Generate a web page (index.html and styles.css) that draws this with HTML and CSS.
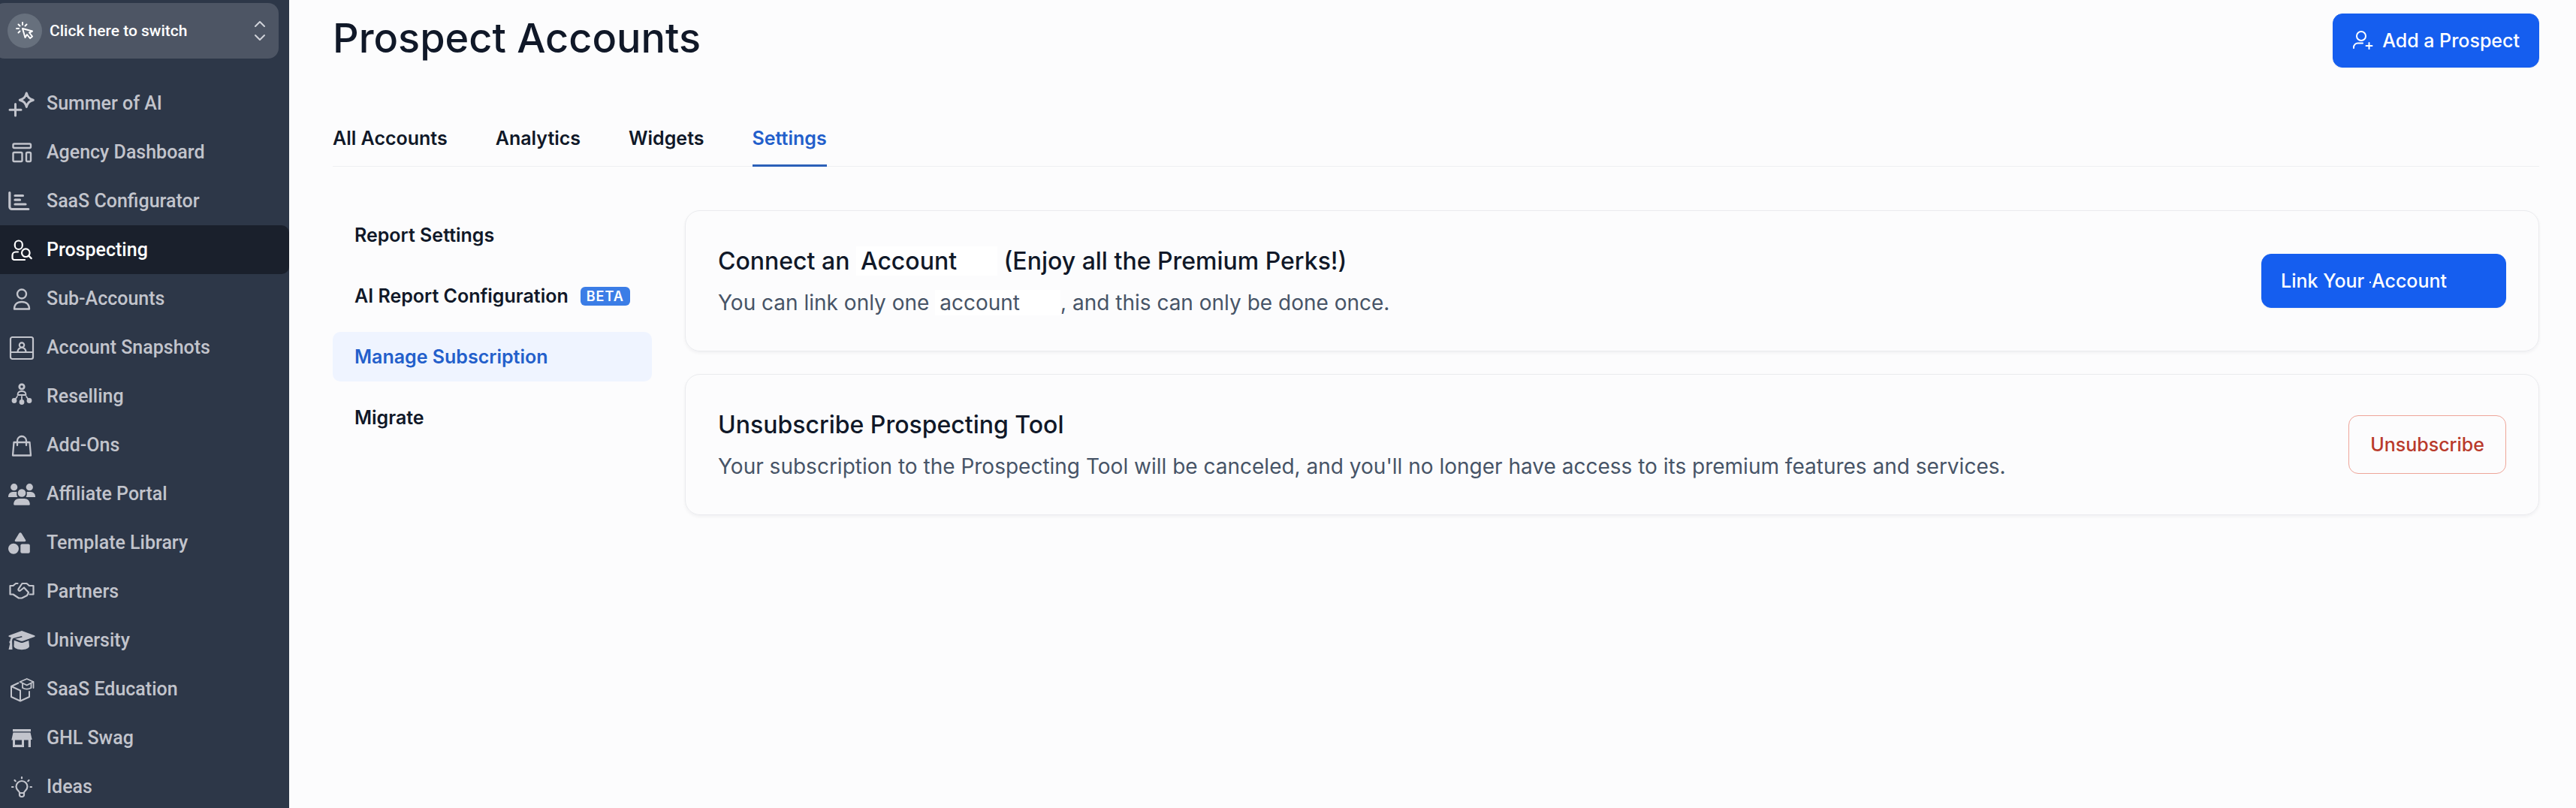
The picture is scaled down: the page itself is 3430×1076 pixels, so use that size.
FILE: index.html
```
<!DOCTYPE html>
<html lang="en">
<head>
    <meta charset="UTF-8">
    <meta name="viewport" content="width=device-width, initial-scale=1.0">
    <title>Prospect Accounts</title>
    <link rel="stylesheet" href="styles.css">
</head>
<body>
    <div class="layout">
        <aside class="sidebar">
            <button type="button" class="switcher">
                <span class="switcher-avatar">
                    <svg width="24" height="24" viewBox="0 0 24 24" fill="none" stroke="currentColor" stroke-width="2" stroke-linejoin="round" stroke-linecap="round">
                        <path d="M9 1v3M3.500 3.500l2 2M1 9h3M3.500 14.500l2-2M14.500 3.500l-2 2"/>
                        <path d="M9 9l3.500 12 2.500-4 4 5 3-2.500-4-5 4-2z"/>
                    </svg>
                </span>
                <span class="switcher-label">Click here to switch</span>
                <svg class="switcher-arrows" width="14" height="28" viewBox="0 0 14 28" fill="none" stroke="currentColor" stroke-width="2" stroke-linecap="round" stroke-linejoin="round">
                    <path d="M1 8l6-6 6 6M1 20l6 6 6-6"/>
                </svg>
            </button>

            <nav class="menu">
                <a href="#" class="menu-item">
                    <svg class="icon" viewBox="0 0 36 36" stroke-width="3">
                        <path d="M24.300 4c1.500 5.500 3.500 7.500 9 9.200-5.500 1.700-7.500 3.700-9 9.200-1.500-5.500-3.500-7.500-9-9.200 5.500-1.700 7.500-3.700 9-9.200z"/>
                        <path d="M9.500 18.500v15.500M2 26.200h15"/>
                    </svg>
                    Summer of AI
                </a>
                <a href="#" class="menu-item">
                    <svg class="icon" viewBox="0 0 36 36" stroke-width="2.400">
                        <rect x="6.500" y="6.500" width="23.500" height="5.500" rx="1.500"/>
                        <rect x="6.500" y="18" width="12" height="12" rx="1.500"/>
                        <rect x="24" y="18" width="6" height="12" rx="1.500"/>
                    </svg>
                    Agency Dashboard
                </a>
                <a href="#" class="menu-item">
                    <svg class="icon" viewBox="0 0 36 36" stroke-width="3.200">
                        <path d="M1.800 6.500v19a3 3 0 0 0 3 3h22M9 10.500h10.500M9 16.200h6.500M9 22h14"/>
                    </svg>
                    SaaS Configurator
                </a>
                <a href="#" class="menu-item active">
                    <svg class="icon" viewBox="0 0 36 36" stroke-width="2.200">
                        <rect x="8.800" y="5.500" width="10" height="11.500" rx="5"/>
                        <path d="M13 20.500H10a4.500 4.500 0 0 0-4.500 4.500v3.500A2.500 2.500 0 0 0 8 31h14"/>
                        <circle cx="23.300" cy="21.700" r="5.300"/>
                        <path d="M27.200 25.600l3.500 3.500"/>
                    </svg>
                    Prospecting
                </a>
                <a href="#" class="menu-item">
                    <svg class="icon" viewBox="0 0 36 36" stroke-width="2.400">
                        <circle cx="18" cy="11.500" r="6"/>
                        <path d="M8 31.500c0-6 4-9.500 10-9.500s10 3.500 10 9.500z"/>
                    </svg>
                    Sub-Accounts
                </a>
                <a href="#" class="menu-item">
                    <svg class="icon" viewBox="0 0 36 36" stroke-width="2.200">
                        <rect x="3" y="4" width="30" height="29" rx="2.500"/>
                        <path d="M3 24h30M12.500 23.500c.5-4 2.500-5.500 5.500-5.500s5 1.500 5.500 5.500"/>
                        <circle cx="18" cy="14.500" r="3.200"/>
                    </svg>
                    Account Snapshots
                </a>
                <a href="#" class="menu-item">
                    <svg class="icon" viewBox="0 0 36 36" stroke-width="1.800">
                        <circle cx="18" cy="5" r="3.200" stroke-width="2.800"/>
                        <path d="M12.500 16c0-3.500 2-5 5.500-5s5.500 1.500 5.500 5zM12 18l-3.500 5M18 18v6M24 18l3.500 5"/>
                        <g fill="currentColor"><circle cx="8" cy="23.500" r="2.500"/><circle cx="18" cy="25.500" r="2.500"/><circle cx="28" cy="23.500" r="2.500"/></g>
                    </svg>
                    Reselling
                </a>
                <a href="#" class="menu-item">
                    <svg class="icon" viewBox="0 0 36 36" stroke-width="2.300">
                        <path d="M7.500 14h21l1.500 17.500H6zM12 18v-6a6 6 0 0 1 12 0v6"/>
                    </svg>
                    Add-Ons
                </a>
                <a href="#" class="menu-item">
                    <svg class="icon solid" viewBox="0 0 36 36">
                        <circle cx="7.700" cy="8.700" r="4.600"/>
                        <circle cx="28.300" cy="8.700" r="4.600"/>
                        <circle cx="18" cy="16.500" r="5.300"/>
                        <path d="M0 22v-1a6 6 0 0 1 6-6h4.500c1 0 1 .5.800 1.500-.3 2 .2 4 1.200 5.500zM36 22v-1a6 6 0 0 0-6-6h-4.500c-1 0-1 .5-.8 1.500.3 2-.2 4-1.200 5.500zM7.200 31.500c0-4.500 3-7.500 7.300-7.500h7c4.300 0 7.300 3 7.300 7.500 0 .8-.4 1.200-1.200 1.200H8.400c-.8 0-1.200-.4-1.200-1.200z"/>
                    </svg>
                    Affiliate Portal
                </a>
                <a href="#" class="menu-item">
                    <svg class="icon solid" viewBox="0 0 36 36">
                        <path d="M14.500 5a1.800 1.800 0 0 1 3 0l5.500 9c.7 1.200.2 2.200-1.200 2.200H10.200c-1.400 0-1.900-1-1.200-2.200z"/>
                        <circle cx="7" cy="25.700" r="7"/>
                        <rect x="16.300" y="19.500" width="12.500" height="12.300" rx="2"/>
                    </svg>
                    Template Library
                </a>
                <a href="#" class="menu-item">
                    <svg class="icon" viewBox="0 0 36 36" stroke-width="2.200">
                        <path d="M12.500 7H10l-3.500 3H2.500v11.500h4l7.500 5h4l7-3.500 2-4-6-6.500-5 4c-1.500.8-3.200-.5-2.500-2.200L18.500 7h6l3.500 3h5.500v11.500h-5"/>
                    </svg>
                    Partners
                </a>
                <a href="#" class="menu-item">
                    <svg class="icon solid" viewBox="0 0 36 36">
                        <path d="M18 5l17 6.200c.9.400.9 1.300 0 1.700L19 18.700c-.7.200-1.300.200-2 0l-8-2.900 9.500-2.300-.4-1.500L6.500 15c-1 1-1.400 2.200-1.400 3.800L5.500 30H.5l1.800-8c-1.300-1-1.200-2.800.2-3.700.1-1.700.6-3 1.400-4.200L1 12.900c-.9-.4-.9-1.300 0-1.700z"/>
                        <path d="M7.800 17.700l8.400 3c1.200.4 2.400.4 3.600 0l7.500-2.700.7 7.500c0 2.700-5 4.700-10 4.700s-10.500-2-10.500-4.700z"/>
                    </svg>
                    University
                </a>
                <a href="#" class="menu-item">
                    <svg class="icon" viewBox="0 0 36 36" stroke-width="2">
                        <path d="M13.500 9.500L4 14v14l12 5.500L28 28v-7M4 14l12 5.500v14"/>
                        <path d="M15.500 8l9.300-4 8.700 4-8.700 4.500zM19 10v6c3.500 2 8 2 11.500 0v-6M33.500 8v8" stroke-width="1.800"/>
                    </svg>
                    SaaS Education
                </a>
                <a href="#" class="menu-item">
                    <svg class="icon solid" viewBox="0 0 36 36">
                        <path d="M6 6h24v3.200H6zM6.500 10.500h23l2.200 9.500h-1.700v10h-3.300V20.500H21V30H6V20.500H4.300zM9 20.500v6.200h9v-6.200z" fill-rule="evenodd"/>
                    </svg>
                    GHL Swag
                </a>
                <a href="#" class="menu-item">
                    <svg class="icon" viewBox="0 0 36 36" stroke-width="2.200">
                        <path d="M15 25.500c0-2-4.500-3.200-4.500-8a7.500 7.500 0 0 1 15 0c0 4.800-4.500 6-4.500 8v3a2.500 2.500 0 0 1-2.500 2.500h-1A2.500 2.500 0 0 1 15 28.500zM15 26h6"/>
                        <path d="M18 5v1.500M8.500 9l1.200 1.200M27.500 9l-1.200 1.200M5 18h1.500M29.500 18H31"/>
                    </svg>
                    Ideas
                </a>
            </nav>
        </aside>

        <main class="content">
            <header class="page-header">
                <h1>Prospect Accounts</h1>
                <button type="button" class="btn btn-primary">
                    <svg width="28" height="28" viewBox="0 0 28 28" fill="none" stroke="currentColor" stroke-width="2" stroke-linecap="round">
                        <circle cx="12" cy="8" r="6"/>
                        <path d="M2 24v-1a5.500 5.500 0 0 1 5.500-5.500H14M22.500 17v8M18.500 21h8"/>
                    </svg>
                    Add a Prospect
                </button>
            </header>

            <nav class="tabs">
                <a href="#" class="tab">All Accounts</a>
                <a href="#" class="tab">Analytics</a>
                <a href="#" class="tab">Widgets</a>
                <a href="#" class="tab active">Settings</a>
            </nav>

            <div class="settings">
                <nav class="settings-nav">
                    <a href="#" class="settings-link">Report Settings</a>
                    <a href="#" class="settings-link">AI Report Configuration <span class="badge">BETA</span></a>
                    <a href="#" class="settings-link active">Manage Subscription</a>
                    <a href="#" class="settings-link">Migrate</a>
                </nav>

                <div class="cards">
                    <section class="card">
                        <div class="card-text">
                            <h2>Connect an <span class="account-name">Account</span> (Enjoy all the Premium Perks!)</h2>
                            <p>You can link only one <span class="account-name">account</span>, and this can only be done once.</p>
                        </div>
                        <button type="button" class="btn btn-primary"><span>Link Your <span class="btn-account">Account</span></span></button>
                    </section>

                    <section class="card">
                        <div class="card-text">
                            <h2>Unsubscribe Prospecting Tool</h2>
                            <p>Your subscription to the Prospecting Tool will be canceled, and you'll no longer have access to its premium features and services.</p>
                        </div>
                        <button type="button" class="btn btn-danger">Unsubscribe</button>
                    </section>
                </div>
            </div>
        </main>
    </div>
</body>
</html>
```
FILE: styles.css
```
* {
    box-sizing: border-box;
}
body {
    margin: 0;
    font-family: Inter, "Liberation Sans", sans-serif;
    background: #fcfcfd;
    color: #101828;
}
a {
    color: inherit;
    text-decoration: none;
}
h1, h2, p {
    margin: 0;
}
svg {
    flex-shrink: 0;
}
.layout {
    display: flex;
    height: 100vh;
}

/* Sidebar */
.sidebar {
    width: 385px;
    flex-shrink: 0;
    padding-top: 4px;
    overflow: hidden;
    background: #2d3748;
    font-family: Roboto, "Liberation Sans", sans-serif;
}
.switcher {
    display: flex;
    align-items: center;
    width: 379px;
    height: 74px;
    margin-left: -8px;
    padding: 0 18px;
    border: 0;
    border-radius: 14px;
    background: #4d5564;
    color: #fff;
    font-family: inherit;
    font-size: 21px;
    font-weight: 500;
}
.switcher-avatar {
    display: flex;
    align-items: center;
    justify-content: center;
    width: 46px;
    height: 46px;
    margin-right: 10px;
    border-radius: 50%;
    background: #67707d;
}
.switcher-label {
    flex: 1;
    text-align: left;
}
.switcher-arrows {
    color: #d0d3d9;
}
.menu {
    margin-top: 27px;
}
.menu-item {
    display: flex;
    align-items: center;
    gap: 15px;
    height: 65px;
    padding-left: 11px;
    color: #c2c4cc;
    font-size: 25px;
    font-weight: 500;
}
.menu-item.active {
    border-radius: 0 10px 10px 0;
    background: #1a202c;
    color: #fff;
}
.icon {
    width: 36px;
    height: 36px;
    fill: none;
    stroke: currentColor;
    stroke-linecap: round;
    stroke-linejoin: round;
}
.icon.solid {
    fill: currentColor;
    stroke: none;
}

/* Main content */
.content {
    flex: 1;
    padding: 18px 49px 0 58px;
}
.page-header {
    display: flex;
    justify-content: space-between;
    align-items: flex-start;
}
h1 {
    font-size: 54px;
    font-weight: 500;
    line-height: 66px;
}
.btn {
    display: flex;
    align-items: center;
    gap: 12px;
    height: 72px;
    padding: 0 25px;
    border: 1px solid #155eef;
    border-radius: 13px;
    font-family: inherit;
    font-size: 25px;
    font-weight: 500;
    white-space: nowrap;
}
.btn-primary {
    background: #155eef;
    color: #fff;
    box-shadow: 0 1px 2px rgba(16, 24, 40, 0.05);
}
.btn-account {
    padding-right: 53px;
}
/* small dot between the label and the account type */
.btn-account::before {
    content: "";
    display: inline-block;
    width: 2px;
    height: 2px;
    margin-right: 1px;
    vertical-align: middle;
    background: #fff;
}
.btn-danger {
    height: 78px;
    padding: 0 28px;
    border-color: #eea599;
    background: transparent;
    color: #b93a2b;
}

.tabs {
    display: flex;
    gap: 64px;
    margin-top: 78px;
    border-bottom: 1px solid #eeeff2;
}
.tab {
    padding-bottom: 19px;
    margin-bottom: -1px;
    border-bottom: 3px solid transparent;
    font-size: 25px;
    font-weight: 600;
    line-height: 32px;
}
.tab.active {
    border-bottom-color: #2b60b8;
    color: #235fcb;
}

.settings {
    display: flex;
    gap: 44px;
    margin-top: 58px;
}
.settings-nav {
    display: flex;
    flex-direction: column;
    gap: 15px;
    width: 425px;
    flex-shrink: 0;
}
.settings-link {
    display: flex;
    align-items: center;
    gap: 16px;
    height: 66px;
    padding: 0 29px;
    border-radius: 10px;
    font-size: 25px;
    font-weight: 600;
    white-space: nowrap;
}
.settings-link.active {
    background: #eff4ff;
    color: #235fcb;
}
.badge {
    padding: 0 8px;
    border-radius: 6px;
    background: #3b7de6;
    color: #fff;
    font-size: 18px;
    letter-spacing: 1px;
    line-height: 25px;
}

.cards {
    flex: 1;
    display: flex;
    flex-direction: column;
    gap: 30px;
}
.card {
    display: flex;
    align-items: center;
    justify-content: space-between;
    gap: 40px;
    padding: 42px 43px;
    border: 1px solid #eaebee;
    border-radius: 20px;
    box-shadow: 0 2px 4px rgba(16, 24, 40, 0.05);
}
.card h2 {
    font-size: 32px;
    font-weight: 500;
    line-height: 50px;
}
.card p {
    margin-top: 8px;
    color: #475467;
    font-size: 28px;
    line-height: 44px;
}
/* white patch with blank room after the word */
.account-name {
    padding: 0 54px 0 6px;
    background: #fff;
}
```
